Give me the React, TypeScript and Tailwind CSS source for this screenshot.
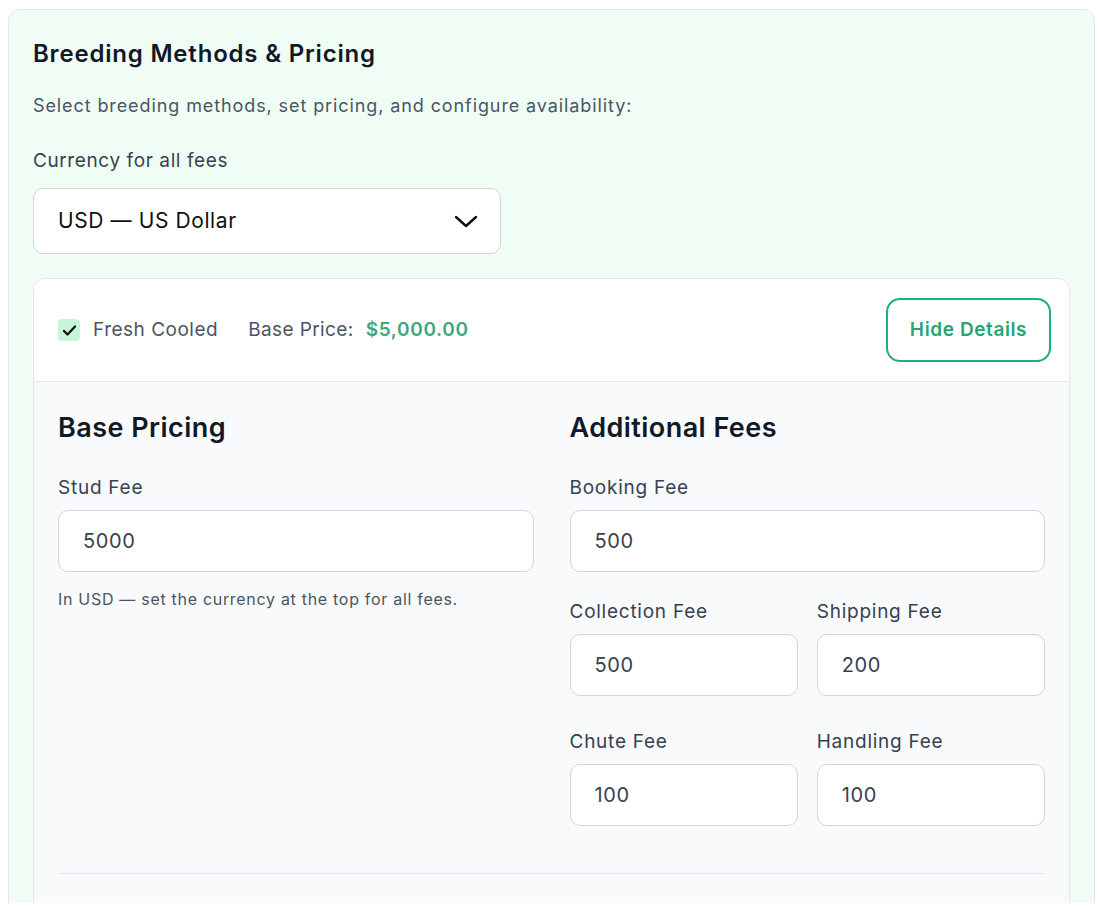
import { useState } from "react";

const FONT = { fontFamily: "Inter, 'Noto Sans', sans-serif" };

function Field({
  label,
  value,
  onChange,
}: {
  label: string;
  value: string;
  onChange: (v: string) => void;
}) {
  return (
    <label className="block">
      <span className="block text-[19px] leading-[28px] tracking-[0.75px] text-[#374151]">{label}</span>
      <input
        type="text"
        value={value}
        onChange={(e) => onChange(e.target.value)}
        className="mt-2 block w-full h-[62px] rounded-[10px] border border-[#d1d5db] bg-white px-6 text-[20px] tracking-[0.6px] text-[#374151] focus:outline-none"
      />
    </label>
  );
}

export default function App() {
  const [checked, setChecked] = useState(true);
  const [open, setOpen] = useState(true);
  const [fees, setFees] = useState({
    stud: "5000",
    booking: "500",
    collection: "500",
    shipping: "200",
    chute: "100",
    handling: "100",
  });

  const set = (k: keyof typeof fees) => (v: string) => setFees((f) => ({ ...f, [k]: v }));

  return (
    <div className="h-[903px] overflow-hidden bg-white" style={FONT}>
      <div className="ml-[8px] mt-[9px] w-[1087px] rounded-xl border border-[#e5e7eb] bg-[#f0fdf4] px-6 pt-7 pb-6">
        {/* Header */}
        <h2 className="text-[24px] leading-[32px] tracking-[0.8px] font-semibold text-[#111827]">
          Breeding Methods &amp; Pricing
        </h2>
        <p className="mt-[22px] text-[18px] leading-[28px] tracking-[0.9px] text-[#4b5563]">
          Select breeding methods, set pricing, and configure availability:
        </p>

        {/* Currency */}
        <div className="mt-[27px] text-[19px] leading-[28px] tracking-[0.6px] text-[#374151]">Currency for all fees</div>
        <div className="mt-[13px] flex h-[66px] w-[468px] items-center justify-between rounded-[10px] border border-[#d1d5db] bg-white pl-6 pr-[22px]">
          <span className="text-[21px] tracking-[0.6px] text-[#111111]">USD — US Dollar</span>
          <svg width="24" height="24" viewBox="0 0 24 24" fill="none" stroke="#111" strokeWidth="2.4" strokeLinecap="round" strokeLinejoin="round">
            <path d="M2 8l10 9 10-9" />
          </svg>
        </div>

        {/* Method card */}
        <div className="mt-6 overflow-hidden rounded-xl border border-[#e5e7eb] bg-white">
          <div className="flex h-[102px] items-center justify-between pl-6 pr-[18px]">
            <div className="flex items-center">
              <button
                type="button"
                onClick={() => setChecked(!checked)}
                className="flex h-[22px] w-[22px] items-center justify-center rounded-[4px] bg-[#c6f6d8] cursor-pointer"
              >
                {checked && (
                  <svg width="19" height="19" viewBox="0 0 24 24" fill="none" stroke="#111" strokeWidth="2.8" strokeLinecap="round" strokeLinejoin="round">
                    <path d="M5 12.5l4.5 4.5L19 7" />
                  </svg>
                )}
              </button>
              <span className="ml-[13px] text-[19px] tracking-[0.5px] text-[#4b5563]">Fresh Cooled</span>
              <span className="ml-[30px] text-[19px] tracking-[0.4px] text-[#4b5563]">Base Price:</span>
              <span className="ml-[12px] text-[19px] tracking-[0.65px] font-semibold text-[#3ea87a]">$5,000.00</span>
            </div>
            <button
              type="button"
              onClick={() => setOpen(!open)}
              className="h-[64px] w-[165px] rounded-[14px] border-2 border-[#22ad7b] bg-white text-[19px] tracking-[0.6px] font-semibold text-[#22a774] cursor-pointer"
            >
              {open ? "Hide Details" : "Show Details"}
            </button>
          </div>

          {open && (
            <div className="border-t border-[#e5e7eb] bg-[#f8fafc] px-6 pt-7 pb-10">
              <div className="grid grid-cols-2 gap-9">
                {/* Base pricing */}
                <div>
                  <h3 className="text-[27px] leading-[36px] tracking-[0.45px] font-semibold text-[#111827]">Base Pricing</h3>
                  <div className="mt-[28px]">
                    <Field label="Stud Fee" value={fees.stud} onChange={set("stud")} />
                  </div>
                  <p className="mt-[15px] text-[16px] leading-[24px] tracking-[0.7px] text-[#4b5563]">
                    In USD — set the currency at the top for all fees.
                  </p>
                </div>

                {/* Additional fees */}
                <div>
                  <h3 className="text-[27px] leading-[36px] tracking-[0.45px] font-semibold text-[#111827]">Additional Fees</h3>
                  <div className="mt-[28px]">
                    <Field label="Booking Fee" value={fees.booking} onChange={set("booking")} />
                  </div>
                  <div className="mt-[26px] grid grid-cols-2 gap-x-[19px] gap-y-[32px]">
                    <Field label="Collection Fee" value={fees.collection} onChange={set("collection")} />
                    <Field label="Shipping Fee" value={fees.shipping} onChange={set("shipping")} />
                    <Field label="Chute Fee" value={fees.chute} onChange={set("chute")} />
                    <Field label="Handling Fee" value={fees.handling} onChange={set("handling")} />
                  </div>
                </div>
              </div>

              <div className="mt-[47px] border-t border-[#e5e7eb]" />
              <div className="h-[80px]" />
            </div>
          )}
        </div>
      </div>
    </div>
  );
}
